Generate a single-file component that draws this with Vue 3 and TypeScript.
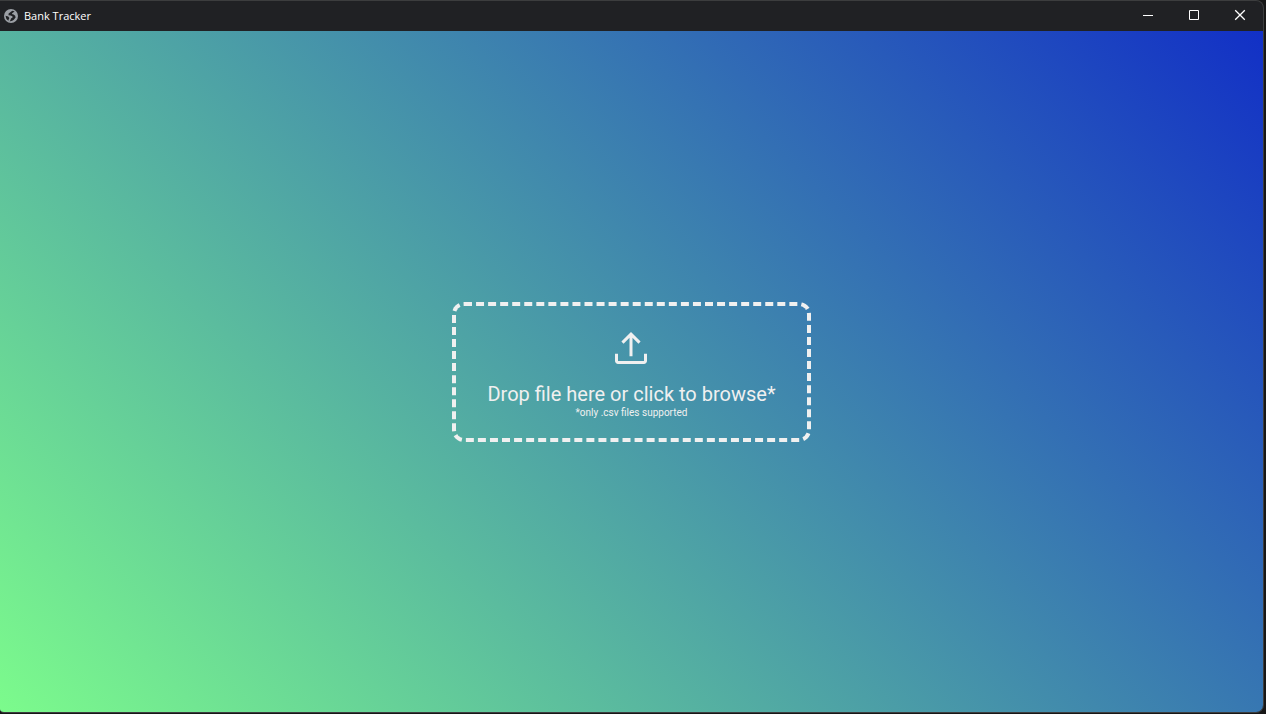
<script setup lang="ts">
import { ref } from 'vue'

const title = 'Bank Tracker'
const fileName = ref('')

function choose(file?: File | null): void {
  if (file && file.name.toLowerCase().endsWith('.csv')) fileName.value = file.name
}
function onChange(event: Event): void {
  choose((event.target as HTMLInputElement).files?.[0])
}
function onDrop(event: DragEvent): void {
  choose(event.dataTransfer?.files[0])
}
</script>

<template>
  <div class="desktop">
    <div class="window">
      <header class="titlebar">
        <svg class="globe" viewBox="0 0 14 14" aria-hidden="true">
          <circle cx="7" cy="7" r="7" fill="#9b9fa5" />
          <path d="M10.6 2.6 L8.6 1.8 L7.2 2.6 L6 3.6 L4.6 4.6 L4.5 6.2 L6.6 6.4 L8.4 7.2 L8.6 8.6 L7 9.6 L6.4 11.2 L5.6 12.2 Q8 12.6 9.8 10.8 L11.6 8.6 L11.2 6.8 L9.6 5.4 L7.8 5 L8.4 4 Z M1.5 6.8 L4.2 7.4 L5.4 9 L4.7 10.3 L4.4 11.8 Q1.7 10.2 1.5 6.8 Z" fill="#202124" />
        </svg>
        <h1 class="title">{{ title }}</h1>
        <div class="controls">
          <button type="button" class="control" aria-label="Minimize">
            <svg viewBox="0 0 10 10"><path d="M0 5.5H10" /></svg>
          </button>
          <button type="button" class="control" aria-label="Maximize">
            <svg viewBox="0 0 10 10"><path d="M.5 .5H9.5V9.5H.5Z" /></svg>
          </button>
          <button type="button" class="control" aria-label="Close">
            <svg viewBox="0 0 10 10"><path d="M.2 .2L9.8 9.8M9.8 .2L.2 9.8" stroke-width="1.3" /></svg>
          </button>
        </div>
      </header>
      <main class="content">
        <label class="dropzone" @dragover.prevent @drop.prevent="onDrop">
          <input class="file" type="file" accept=".csv" @change="onChange" />
          <svg class="upload" viewBox="0 0 48 48" aria-hidden="true">
            <path d="M22.5 32.15V13.8l-5.95 5.95-2.15-2.15L24 8l9.6 9.6-2.15 2.15-5.95-5.95v18.35ZM11 40q-1.2 0-2.1-.9Q8 38.2 8 37v-7.15h3V37h26v-7.15h3V37q0 1.2-.9 2.1-.9.9-2.1.9Z" />
          </svg>
          <span class="prompt">{{ fileName || 'Drop file here or click to browse*' }}</span>
          <small class="hint">*only .csv files supported</small>
        </label>
      </main>
    </div>
  </div>
</template>

<style>
body {
  margin: 0;
}
</style>

<style scoped>
.desktop {
  box-sizing: border-box;
  height: 100vh;
  padding: 0 2px 1px 0;
  background: #171717;
}
.window {
  box-sizing: border-box;
  display: flex;
  flex-direction: column;
  height: 100%;
  overflow: hidden;
  border: 1px solid #3c3d3e;
  border-left: 0;
  border-radius: 0 8px 8px 4px;
  background: #202124;
}
.titlebar {
  display: flex;
  align-items: center;
  height: 30px;
  padding-left: 4px;
}
.globe {
  width: 14px;
  height: 14px;
  margin-right: 6px;
}
.title {
  flex: 1;
  margin: 0;
  color: #fff;
  font: 400 11px/16px "Open Sans", "Noto Sans", sans-serif;
}
.controls {
  display: flex;
  align-self: stretch;
}
.control {
  display: flex;
  align-items: center;
  justify-content: center;
  width: 46px;
  padding: 0 0 2px;
  border: 0;
  background: transparent;
}
.control:hover {
  background: #3a3b3e;
}
.control svg {
  width: 10px;
  height: 10px;
  overflow: visible;
  fill: none;
  stroke: #fff;
}
.content {
  display: flex;
  flex: 1;
  align-items: center;
  justify-content: center;
  background: linear-gradient(45deg, #7cfb8c, #1230c6);
}
.dropzone {
  display: flex;
  flex-direction: column;
  align-items: center;
  padding: 18px 31px;
  border: 4px dashed #f0f0f0;
  border-radius: 12px;
  color: #f0f0f0;
  font-family: Roboto, sans-serif;
  cursor: pointer;
}
.file {
  position: absolute;
  width: 1px;
  height: 1px;
  opacity: 0;
}
.upload {
  width: 48px;
  height: 48px;
  margin-bottom: 10px;
  fill: #f0f0f0;
}
.prompt {
  font-size: 20px;
  line-height: 24px;
}
.hint {
  font-size: 10px;
  line-height: 14px;
}
</style>
